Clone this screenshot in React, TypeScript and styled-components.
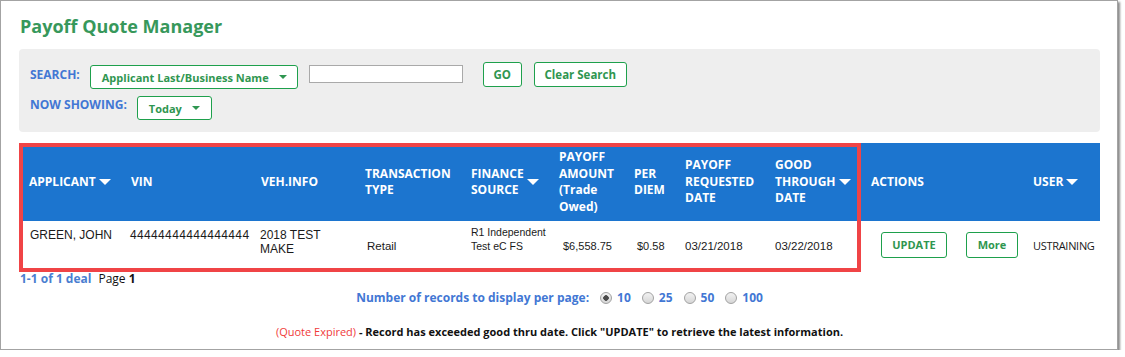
import styled, { createGlobalStyle } from 'styled-components';

const GlobalStyle = createGlobalStyle`
  html, body {
    margin: 0;
    padding: 0;
    background: #fff;
  }
  body {
    font-family: 'Open Sans', 'Liberation Sans', sans-serif;
  }
`;

const COLUMNS = '102px 130px 104px 106px 88px 75px 51px 90px 96px 162px 77px';

const green = '#2f9650';
const greenBorder = '#1ea04c';
const blue = '#4277d4';

interface Column {
  label: string[];
  sort?: boolean;
}

const columns: Column[] = [
  { label: ['APPLICANT'], sort: true },
  { label: ['VIN'] },
  { label: ['VEH.INFO'] },
  { label: ['TRANSACTION', 'TYPE'] },
  { label: ['FINANCE', 'SOURCE'], sort: true },
  { label: ['PAYOFF', 'AMOUNT', '(Trade', 'Owed)'] },
  { label: ['PER', 'DIEM'] },
  { label: ['PAYOFF', 'REQUESTED', 'DATE'] },
  { label: ['GOOD', 'THROUGH', 'DATE'], sort: true },
  { label: ['ACTIONS'] },
  { label: ['USER'], sort: true }
];

const pageSizes = [10, 25, 50, 100];

const App = () => {
  return (
    <>
      <GlobalStyle />
      <Frame>
        <Title>Payoff Quote Manager</Title>

        <SearchPanel>
          <PanelRow>
            <FieldLabel $offset={5}>SEARCH:</FieldLabel>
            <SelectBox $offset={3} $width={208}>
              Applicant Last/Business Name
              <Caret />
            </SelectBox>
            <TextInput />
            <GreenButton $width={39}>GO</GreenButton>
            <GreenButton $width={93}>Clear Search</GreenButton>
          </PanelRow>
          <PanelRow>
            <FieldLabel $offset={1}>NOW SHOWING:</FieldLabel>
            <SelectBox $offset={0} $width={75}>
              Today
              <Caret />
            </SelectBox>
          </PanelRow>
        </SearchPanel>

        <TableWrap>
          <HeaderRow>
            {columns.map(col => (
              <HeaderCell key={col.label.join(' ')}>
                <span>
                  {col.label.map(line => (
                    <HeaderLine key={line}>{line}</HeaderLine>
                  ))}
                </span>
                {col.sort && <SortArrow />}
              </HeaderCell>
            ))}
          </HeaderRow>

          <DataRow>
            <DataCell $pad={11}>GREEN, JOHN</DataCell>
            <DataCell $pad={9} $spacing={0.35}>
              44444444444444444
            </DataCell>
            <DataCell $pad={9}>
              2018 TEST
              <br />
              MAKE
            </DataCell>
            <DataCell $pad={12} $middle $size={11.5}>
              Retail
            </DataCell>
            <DataCell $pad={10} $top={4} $size={10.5}>
              R1 Independent
              <br />
              Test eC FS
            </DataCell>
            <DataCell $pad={14} $middle $size={11}>
              $6,558.75
            </DataCell>
            <DataCell $pad={13} $middle $size={11}>
              $0.58
            </DataCell>
            <DataCell $pad={10} $middle $size={11.5}>
              03/21/2018
            </DataCell>
            <DataCell $pad={10} $middle $size={11.5}>
              03/22/2018
            </DataCell>
            <ActionCell>
              <RowButton $width={66}>UPDATE</RowButton>
              <RowButton $width={52}>More</RowButton>
            </ActionCell>
            <UserCell>USTRAINING</UserCell>
          </DataRow>

          <Highlight />
        </TableWrap>

        <Pager>
          <DealCount>1-1 of 1 deal</DealCount>
          <span>
            Page <b>1</b>
          </span>
        </Pager>

        <PageSize>
          <PageSizeLabel>Number of records to display per page:</PageSizeLabel>
          {pageSizes.map(size => (
            <RadioOption key={size}>
              <Radio $checked={size === 10} />
              {size}
            </RadioOption>
          ))}
        </PageSize>

        <Footnote>
          <Expired>(Quote Expired)</Expired> - Record has exceeded good thru
          date. Click "UPDATE" to retrieve the latest information.
        </Footnote>
      </Frame>
    </>
  );
};

export default App;

const Frame = styled.div`
  width: 1118px;
  height: 350px;
  box-sizing: border-box;
  border: 1px solid #a3a3a3;
  box-shadow: 2px 2px 2px rgba(0, 0, 0, 0.45);
  padding: 13px 0 0 18px;
  background: #fff;
`;

const Title = styled.h1`
  margin: 0 0 11px 1px;
  font-size: 18px;
  line-height: 24px;
  font-weight: 700;
  color: #37985b;
`;

const SearchPanel = styled.div`
  width: 1081px;
  box-sizing: border-box;
  background: #eeeeee;
  border-radius: 4px;
  padding: 13px 11px 11px;
  display: flex;
  flex-direction: column;
  gap: 9px;
`;

const PanelRow = styled.div`
  display: flex;
  align-items: flex-start;
  height: 25px;
`;

const FieldLabel = styled.span<{ $offset: number }>`
  margin-top: ${props => props.$offset}px;
  margin-right: 10px;
  font-size: 12px;
  line-height: 16px;
  font-weight: 700;
  color: ${blue};
`;

const SelectBox = styled.div<{ $offset: number; $width: number }>`
  margin-top: ${props => props.$offset}px;
  width: ${props => props.$width}px;
  height: 24px;
  box-sizing: border-box;
  display: flex;
  align-items: center;
  gap: 10px;
  padding: 0 0 0 11px;
  background: #fff;
  border: 1px solid ${greenBorder};
  border-radius: 3px;
  font-size: 11px;
  font-weight: 700;
  color: ${green};
  white-space: nowrap;
`;

const Caret = styled.span`
  width: 0;
  height: 0;
  border-left: 4px solid transparent;
  border-right: 4px solid transparent;
  border-top: 4px solid ${green};
`;

const TextInput = styled.input`
  margin: 3px 0 0 11px;
  width: 154px;
  height: 18px;
  box-sizing: border-box;
  border: 1px solid #a9a9a9;
  background: #fff;
  padding: 0;
`;

const GreenButton = styled.button<{ $width: number }>`
  margin-left: ${props => (props.$width < 50 ? 20 : 12)}px;
  width: ${props => props.$width}px;
  height: 25px;
  padding: 0;
  background: #fff;
  border: 1px solid ${greenBorder};
  border-radius: 3px;
  font-family: 'Open Sans', sans-serif;
  font-size: 11.5px;
  font-weight: 700;
  color: ${green};
`;

const TableWrap = styled.div`
  position: relative;
  width: 1081px;
  margin-top: 11px;
`;

const HeaderRow = styled.div`
  display: grid;
  grid-template-columns: ${COLUMNS};
  height: 78px;
  background: #1c75cf;
`;

const HeaderCell = styled.div`
  display: flex;
  align-items: center;
  gap: 3px;
  padding-left: 10px;
  color: #fff;
  font-size: 12px;
  font-weight: 700;
  line-height: 16.5px;
`;

const HeaderLine = styled.span`
  display: block;
`;

const SortArrow = styled.span`
  width: 0;
  height: 0;
  border-left: 6px solid transparent;
  border-right: 6px solid transparent;
  border-top: 6px solid #fff;
`;

const DataRow = styled.div`
  display: grid;
  grid-template-columns: ${COLUMNS};
  height: 47px;
  background: #fff;
`;

const DataCell = styled.div<{
  $pad: number;
  $middle?: boolean;
  $top?: number;
  $size?: number;
  $spacing?: number;
}>`
  display: flex;
  align-items: ${props => (props.$middle ? 'center' : 'flex-start')};
  padding: ${props => (props.$middle ? 3 : props.$top ?? 7)}px 0 0
    ${props => props.$pad}px;
  font-family: 'Liberation Sans', Arial, sans-serif;
  font-size: ${props => props.$size ?? 12}px;
  letter-spacing: ${props => props.$spacing ?? 0}px;
  line-height: 14px;
  color: #1a1a1a;
  white-space: nowrap;
`;

const ActionCell = styled.div`
  display: flex;
  align-items: center;
  gap: 19px;
  padding-left: 20px;
`;

const RowButton = styled.button<{ $width: number }>`
  width: ${props => props.$width}px;
  height: 26px;
  padding: 0;
  background: #fff;
  border: 1px solid ${greenBorder};
  border-radius: 3px;
  font-family: 'Open Sans', sans-serif;
  font-size: 11px;
  font-weight: 700;
  color: ${green};
`;

const UserCell = styled.div`
  display: flex;
  align-items: center;
  padding: 2px 0 0 10px;
  font-size: 11px;
  letter-spacing: -0.3px;
  color: #1a1a1a;
`;

const Highlight = styled.div`
  position: absolute;
  top: 0;
  left: 0;
  width: 842px;
  bottom: -4px;
  box-sizing: border-box;
  border: 4px solid #f04446;
  pointer-events: none;
`;

const Pager = styled.div`
  display: flex;
  gap: 7px;
  margin: 3px 0 0 1px;
  font-size: 12px;
  line-height: 16px;
  color: #111;
`;

const DealCount = styled.span`
  font-weight: 700;
  color: #4a7ed0;
`;

const PageSize = styled.div`
  width: 1081px;
  margin-top: 3px;
  display: flex;
  justify-content: center;
  align-items: center;
  gap: 11px;
  font-size: 12px;
  line-height: 16px;
  font-weight: 700;
  color: ${blue};
`;

const PageSizeLabel = styled.span`
  margin-right: 0;
`;

const RadioOption = styled.label`
  display: flex;
  align-items: center;
  gap: 5px;
`;

const Radio = styled.span<{ $checked: boolean }>`
  width: 12px;
  height: 12px;
  box-sizing: border-box;
  border-radius: 50%;
  border: 1px solid #a2a2a2;
  background: radial-gradient(
      circle,
      ${props => (props.$checked ? '#4a4a4a 0 2.5px' : 'transparent 0 0')},
      transparent 3px
    ),
    linear-gradient(#f2f2f2, #d6d6d6);
`;

const Footnote = styled.div`
  width: 1081px;
  margin-top: 18px;
  text-align: center;
  font-size: 11px;
  line-height: 16px;
  font-weight: 700;
  color: #111;
`;

const Expired = styled.span`
  font-weight: 400;
  color: #f03a3a;
`;
